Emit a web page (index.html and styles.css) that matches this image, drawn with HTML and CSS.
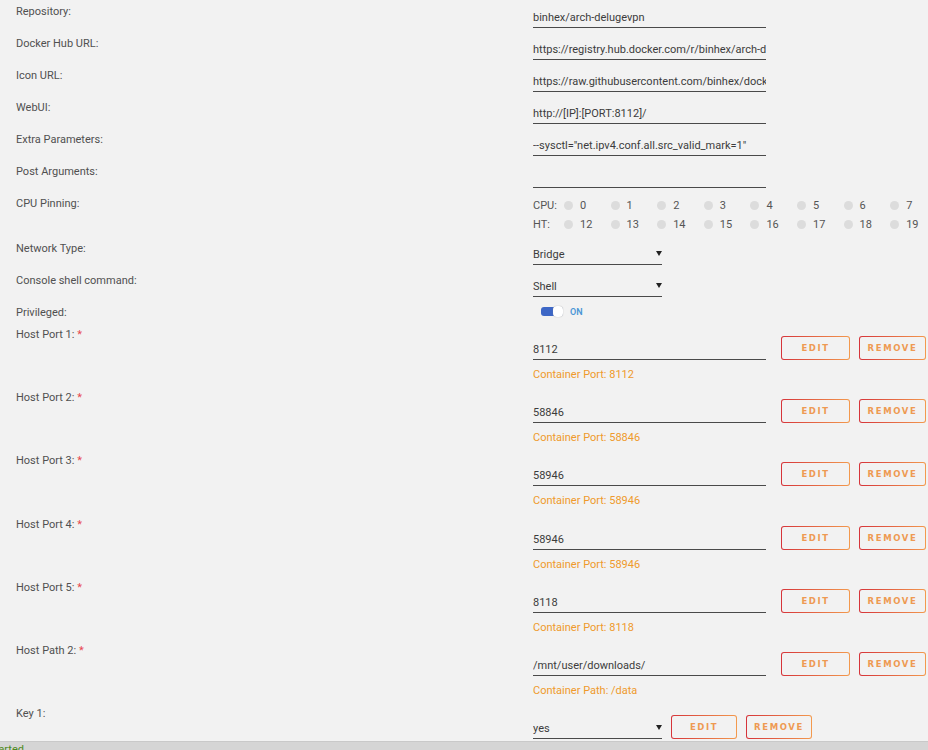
FILE: index.html
```html
<!DOCTYPE html>
<html lang="en">
<head>
    <meta charset="UTF-8">
    <title>Update Container</title>
    <link rel="stylesheet" href="styles.css">
</head>
<body>
    <form class="form">
        <div class="row">
            <div class="label">Repository:</div>
            <div class="field"><div class="input">binhex/arch-delugevpn</div></div>
        </div>
        <div class="row">
            <div class="label">Docker Hub URL:</div>
            <div class="field"><div class="input">https://registry.hub.docker.com/r/binhex/arch-delugevpn/</div></div>
        </div>
        <div class="row">
            <div class="label">Icon URL:</div>
            <div class="field"><div class="input">https://raw.githubusercontent.com/binhex/docker-templates/master/binhex/images/delugevpn-icon.png</div></div>
        </div>
        <div class="row">
            <div class="label">WebUI:</div>
            <div class="field"><div class="input">http://[IP]:[PORT:8112]/</div></div>
        </div>
        <div class="row">
            <div class="label">Extra Parameters:</div>
            <div class="field"><div class="input">--sysctl="net.ipv4.conf.all.src_valid_mark=1"</div></div>
        </div>
        <div class="row">
            <div class="label">Post Arguments:</div>
            <div class="field"><div class="input"></div></div>
        </div>

        <div class="row row-cpu">
            <div class="label">CPU Pinning:</div>
            <div class="field">
                <div class="cpus">
                    <span class="cpu-name">CPU:</span>
                    <span class="cpu"><i></i>0</span>
                    <span class="cpu"><i></i>1</span>
                    <span class="cpu"><i></i>2</span>
                    <span class="cpu"><i></i>3</span>
                    <span class="cpu"><i></i>4</span>
                    <span class="cpu"><i></i>5</span>
                    <span class="cpu"><i></i>6</span>
                    <span class="cpu"><i></i>7</span>
                </div>
                <div class="cpus">
                    <span class="cpu-name">HT:</span>
                    <span class="cpu"><i></i>12</span>
                    <span class="cpu"><i></i>13</span>
                    <span class="cpu"><i></i>14</span>
                    <span class="cpu"><i></i>15</span>
                    <span class="cpu"><i></i>16</span>
                    <span class="cpu"><i></i>17</span>
                    <span class="cpu"><i></i>18</span>
                    <span class="cpu"><i></i>19</span>
                </div>
            </div>
        </div>

        <div class="row">
            <div class="label">Network Type:</div>
            <div class="field"><div class="input select">Bridge</div></div>
        </div>
        <div class="row">
            <div class="label">Console shell command:</div>
            <div class="field"><div class="input select">Shell</div></div>
        </div>
        <div class="row row-switch">
            <div class="label">Privileged:</div>
            <div class="field">
                <span class="switch"><i></i></span>
                <span class="switch-text">ON</span>
            </div>
        </div>

        <div class="row row-port">
            <div class="label">Host Port 1: <b>*</b></div>
            <div class="field">
                <div class="line">
                    <div class="input">8112</div>
                    <button type="button" class="btn btn-edit">EDIT</button>
                    <button type="button" class="btn">REMOVE</button>
                </div>
                <div class="hint">Container Port: 8112</div>
            </div>
        </div>
        <div class="row row-port">
            <div class="label">Host Port 2: <b>*</b></div>
            <div class="field">
                <div class="line">
                    <div class="input">58846</div>
                    <button type="button" class="btn btn-edit">EDIT</button>
                    <button type="button" class="btn">REMOVE</button>
                </div>
                <div class="hint">Container Port: 58846</div>
            </div>
        </div>
        <div class="row row-port">
            <div class="label">Host Port 3: <b>*</b></div>
            <div class="field">
                <div class="line">
                    <div class="input">58946</div>
                    <button type="button" class="btn btn-edit">EDIT</button>
                    <button type="button" class="btn">REMOVE</button>
                </div>
                <div class="hint">Container Port: 58946</div>
            </div>
        </div>
        <div class="row row-port">
            <div class="label">Host Port 4: <b>*</b></div>
            <div class="field">
                <div class="line">
                    <div class="input">58946</div>
                    <button type="button" class="btn btn-edit">EDIT</button>
                    <button type="button" class="btn">REMOVE</button>
                </div>
                <div class="hint">Container Port: 58946</div>
            </div>
        </div>
        <div class="row row-port">
            <div class="label">Host Port 5: <b>*</b></div>
            <div class="field">
                <div class="line">
                    <div class="input">8118</div>
                    <button type="button" class="btn btn-edit">EDIT</button>
                    <button type="button" class="btn">REMOVE</button>
                </div>
                <div class="hint">Container Port: 8118</div>
            </div>
        </div>
        <div class="row row-port">
            <div class="label">Host Path 2: <b>*</b></div>
            <div class="field">
                <div class="line">
                    <div class="input">/mnt/user/downloads/</div>
                    <button type="button" class="btn btn-edit">EDIT</button>
                    <button type="button" class="btn">REMOVE</button>
                </div>
                <div class="hint">Container Path: /data</div>
            </div>
        </div>

        <div class="row row-key">
            <div class="label">Key 1:</div>
            <div class="field">
                <div class="line">
                    <div class="input select">yes</div>
                    <button type="button" class="btn btn-small">EDIT</button>
                    <button type="button" class="btn btn-small">REMOVE</button>
                </div>
            </div>
        </div>
    </form>

    <footer class="footer"><span>Array Started</span></footer>
</body>
</html>
```

FILE: styles.css
```css
body {
    margin: 0;
    background: #f2f2f2;
    color: #505050;
    font-family: Roboto, "Open Sans", sans-serif;
    font-size: 11px;
    overflow: hidden;
    height: 750px;
}

.form {
    margin: 0;
}

.row {
    display: flex;
    align-items: flex-start;
    height: 32px;
}

.label {
    width: 517px;
    padding-left: 16px;
    padding-top: 5px;
    line-height: 14px;
    flex: none;
}

.label b {
    color: #e8474f;
    font-weight: normal;
}

.field {
    flex: 1;
}

/* underlined text inputs */
.input {
    width: 233px;
    height: 28px;
    padding-top: 11px;
    box-sizing: border-box;
    line-height: 14px;
    color: #3c3c3c;
    white-space: nowrap;
    overflow: hidden;
    border-bottom: 1px solid #4a4a4a;
}

.select {
    width: 129px;
    position: relative;
}

.select::after {
    content: "";
    position: absolute;
    right: 0;
    top: 14px;
    border-left: 3px solid transparent;
    border-right: 3px solid transparent;
    border-top: 5px solid #222;
}

/* cpu pinning */
.row-cpu {
    height: 45px;
}

.cpus {
    display: flex;
    align-items: center;
    height: 19px;
    color: #555;
}

.cpus:first-child {
    margin-top: 4px;
}

.cpu-name {
    width: 31px;
}

.cpu {
    display: flex;
    align-items: center;
    width: 46.6px;
}

.cpu i {
    width: 9px;
    height: 9px;
    border-radius: 50%;
    background: #dcdcdc;
    margin-right: 7px;
}

/* privileged switch */
.row-switch {
    height: 22px;
}

.row-switch .field {
    display: flex;
    align-items: center;
    height: 21px;
    padding-left: 8px;
}

.switch {
    position: relative;
    width: 22px;
    height: 9px;
    border-radius: 3px;
    background: #3d67c6;
}

.switch i {
    position: absolute;
    right: 0;
    top: -1px;
    width: 10px;
    height: 11px;
    border-radius: 4px;
    background: #fff;
    box-shadow: 0 0 1px #999;
}

.switch-text {
    margin-left: 7px;
    color: #4b97d6;
    font-size: 9px;
    font-weight: 600;
}

/* ports & paths */
.row-port {
    height: 63.2px;
}

.row-port .field {
    padding-top: 9px;
}

.line {
    display: flex;
    align-items: flex-end;
}

.hint {
    margin-top: 8px;
    line-height: 14px;
    color: #ef9a2c;
}

.btn {
    width: 67px;
    height: 24px;
    margin-left: 9px;
    padding: 0;
    border: 1.5px solid transparent;
    border-radius: 3px;
    background: linear-gradient(#f2f2f2, #f2f2f2) padding-box,
                linear-gradient(90deg, #d6343a, #f39a4e) border-box;
    color: #ee9a52;
    font-family: "DejaVu Sans", sans-serif;
    font-size: 8.5px;
    font-weight: bold;
    letter-spacing: 1.6px;
    cursor: pointer;
}

.btn-edit {
    width: 69px;
    margin-left: 15px;
}

.row-key {
    height: 39px;
}

.row-key .field {
    padding-top: 9px;
}

.btn-small {
    width: 66px;
    margin-left: 9px;
}

.footer {
    height: 9px;
    background: #d5d5d5;
    border-top: 1px solid #c9c9c9;
    overflow: hidden;
    color: #4e8a22;
    font-size: 11px;
    line-height: 16px;
    white-space: nowrap;
}

.footer span {
    display: inline-block;
    margin-left: -40px;
}
```
